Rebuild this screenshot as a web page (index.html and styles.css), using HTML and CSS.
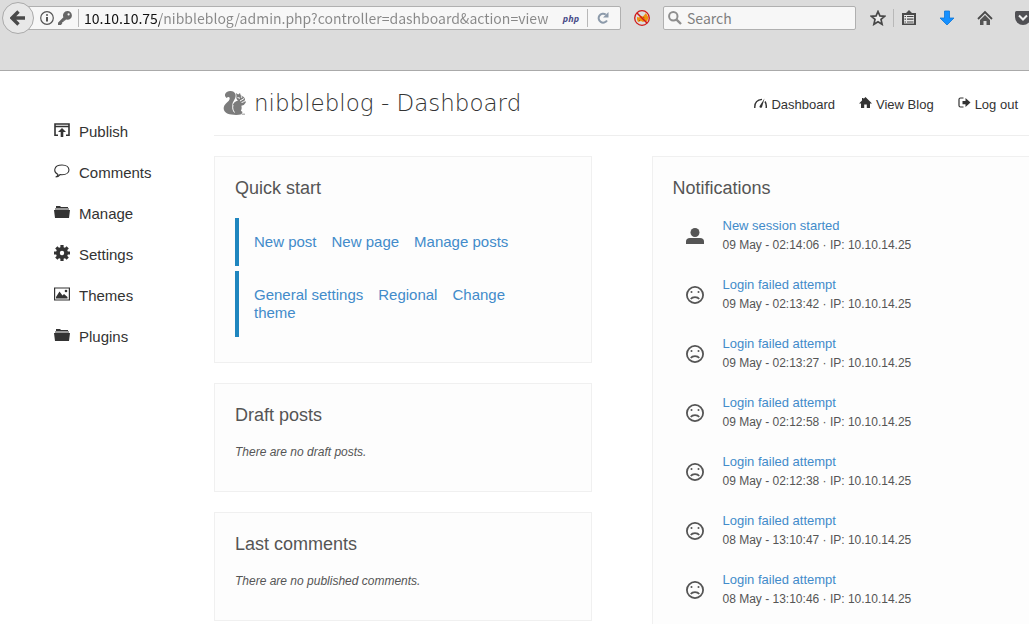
FILE: index.html
```html
<!DOCTYPE html>
<html lang="en">
<head>
  <meta charset="UTF-8">
  <title>nibbleblog - Dashboard</title>
  <link rel="stylesheet" href="styles.css">
</head>
<body>
  <svg class="sprite" aria-hidden="true">
    <symbol id="folder" viewBox="0 0 16 14">
      <path d="M2 3V1h4l1 1h7v1z" fill="#333"/>
      <path d="M1 3h14v2H1z" fill="#999"/>
      <path d="M0 5h16l-1 8H1z" fill="#333"/>
    </symbol>
    <symbol id="sad" viewBox="0 0 18 18">
      <circle cx="9" cy="9" r="8.1" fill="none" stroke="#555" stroke-width="1.8"/>
      <circle cx="5.500" cy="6" r="1" fill="#555"/>
      <circle cx="12.500" cy="6" r="1" fill="#555"/>
      <path d="M4.8 13c1.6-2.6 6.800-2.6 8.400 0" fill="none" stroke="#555" stroke-width="1.700"/>
    </symbol>
  </svg>

  <!-- Browser toolbar -->
  <div class="toolbar">
    <button class="back-button" aria-label="Back">
      <svg width="16" height="16" viewBox="0 0 16 16"><path d="M8.500 1.500L2 8l6.500 6.500M3 8h12" fill="none" stroke="#4a4a4a" stroke-width="3.400"/></svg>
    </button>
    <div class="url-bar">
      <svg width="14" height="14" viewBox="0 0 14 14"><circle cx="7" cy="7" r="6.300" fill="none" stroke="#555" stroke-width="1.200"/><path d="M6 6h2v4.500H6zM6 3.200h2v1.600H6z" fill="#555"/></svg>
      <svg class="key-icon" width="14" height="14" viewBox="0 0 14 14"><path d="M9.500 0a4.400 4.400 0 0 1 0 8.800L8 8.600 6.800 9.800H5.600v1.200H4.300v1.300L3 14H0v-2.200l5.400-5.600A4.400 4.400 0 0 1 9.500 0z" fill="#666"/><circle cx="10.600" cy="3.400" r="1.100" fill="#f7f7f7"/></svg>
      <span class="divider"></span>
      <input class="url-input" type="text" aria-label="Address" value="10.10.10.75/nibbleblog/admin.php?controller=dashboard&amp;action=view">
      <span class="php-badge">php</span>
      <span class="divider"></span>
      <button class="icon-button reload" aria-label="Reload">
        <svg width="12" height="12" viewBox="0 0 12 12"><path d="M8.800 2.500A4.500 4.500 0 1 0 10 8.500" fill="none" stroke="#8c9aaa" stroke-width="2"/><path d="M11.500 0v5.500H6z" fill="#8c9aaa"/></svg>
      </button>
    </div>
    <button class="icon-button bug" aria-label="Firebug">
      <svg width="16" height="16" viewBox="0 0 16 16"><path d="M3 7l2 .5L7 6l2 .5L12 3l1 2 1.500 2.500-1.500 4-2-.5-2 1-2-1-3 1-1-2.500z" fill="#f09010"/><path d="M9 7l1.500 1M5 10l1 1" stroke="#a85a00"/><circle cx="8" cy="8" r="7.300" fill="none" stroke="#d01818" stroke-width="1.300"/><path d="M3 3l10 10" stroke="#d01818" stroke-width="1.500"/></svg>
    </button>
    <div class="search-bar">
      <svg width="14" height="14" viewBox="0 0 14 14"><circle cx="5.300" cy="5.300" r="4.200" fill="none" stroke="#8e8e8e" stroke-width="2"/><path d="M8.300 8.300l4.700 4.700" stroke="#8e8e8e" stroke-width="2.400"/></svg>
      <input class="search-input" type="text" aria-label="Search" placeholder="Search">
    </div>
    <div class="tools">
      <button class="icon-button" aria-label="Bookmark">
        <svg width="16" height="16" viewBox="0 0 16 16"><path d="M8 1.500l1.900 4.400 4.700.4-3.600 3.100 1.100 4.900L8 11.700l-4.100 2.600L5 9.400 1.400 6.300l4.700-.4z" fill="#ededed" stroke="#484848" stroke-width="1.700"/></svg>
      </button>
      <span class="divider"></span>
      <button class="icon-button" aria-label="Bookmarks list">
        <svg width="16" height="16" viewBox="0 0 16 16"><path d="M1 3h4l3-3 3 3h4v12H1z" fill="#4a4a4a"/><path d="M3 5h10v8.500H3z" fill="#e6e6e6"/><path d="M3.500 6.500h1.500M3.500 9.200h1.500M3.500 12h1.500M6 6.500h6.500M6 9.200h6.500M6 12h6.500" stroke="#4a4a4a" stroke-width="1.200"/></svg>
      </button>
      <button class="icon-button download" aria-label="Downloads">
        <svg width="16" height="16" viewBox="0 0 16 16"><path d="M5.500 1h5v7H15l-7 7-7-7h4.500z" fill="#1590ff" stroke="#0f76d6" stroke-width=".8"/></svg>
      </button>
      <button class="icon-button" aria-label="Home">
        <svg width="16" height="16" viewBox="0 0 16 16"><path d="M1 9l7-7 7 7" fill="none" stroke="#4a4a4a" stroke-width="1.800"/><path d="M3 10l5-5 5 5v5H9.500v-4h-3v4H3z" fill="#555"/></svg>
      </button>
      <button class="icon-button" aria-label="Pocket">
        <svg width="16" height="16" viewBox="0 0 16 16"><path d="M0 2.500Q0 1 1.500 1h13Q16 1 16 2.500V7A8 8 0 0 1 0 7z" fill="#505054"/><path d="M4 5.500l4 4 4-4" fill="none" stroke="#eee" stroke-width="2"/></svg>
      </button>
    </div>
  </div>

  <div class="page">
    <nav class="sidebar">
      <a href="#">
        <svg width="16" height="14" viewBox="0 0 16 14"><path d="M4 12.200H1V1h14v11.200h-3M1 3.500h14" fill="none" stroke="#333" stroke-width="1.600"/><path d="M8 5l4 4H9.300v5H6.700V9H4z" fill="#333"/></svg>
        Publish
      </a>
      <a href="#">
        <svg width="16" height="14" viewBox="0 0 16 14"><path d="M4 10.500C-1 8-.5 1 8 1c9 0 9.500 9.500 0 9.800-1 0-1.500 0-2-.2-1 1.400-2.500 2.300-4.300 2.300C3 12.400 3.800 11.600 4 10.500z" fill="none" stroke="#333" stroke-width="1.100"/></svg>
        Comments
      </a>
      <a href="#">
        <svg width="16" height="14"><use href="#folder"/></svg>
        Manage
      </a>
      <a href="#">
        <svg width="16" height="16" viewBox="0 0 16 16"><path d="M8 0v16M0 8h16M2.300 2.300l11.400 11.400M13.700 2.300L2.300 13.700" stroke="#333" stroke-width="3.200"/><circle cx="8" cy="8" r="6" fill="#333"/><circle cx="8" cy="8" r="2.200" fill="#fff"/></svg>
        Settings
      </a>
      <a href="#">
        <svg width="16" height="14" viewBox="0 0 16 14"><path d="M.6 1h14.800v12H.6z" fill="none" stroke="#333" stroke-width="1.200"/><path d="M2 11.500V10l3.500-5.500 3 4 1.500-1.500 3.500 3v1.500z" fill="#333"/><circle cx="12" cy="4" r="1.300" fill="#333"/></svg>
        Themes
      </a>
      <a href="#">
        <svg width="16" height="14"><use href="#folder"/></svg>
        Plugins
      </a>
    </nav>

    <div class="content">
      <header class="header">
        <svg width="24" height="26" viewBox="0 0 24 26">
          <path d="M3.500 8C0 5 3 .8 7.500 1c5 .2 6.500 4.500 4 8.500-1.400 2.300-2.500 4-2 6.500.5-3 3-5 5.500-5.500-1.500-.8-2-2.500-1.500-4.500L13 3l2.200 1.600L17 3l.8 2.500c2 .3 3.500 1.600 4.200 3.500.3 1.500-1 2.600-3 2.700l-.8 1.300 2-.5 2.300-1.500.3 1.500-2 2.500-2.500.7c.6 1.800.5 3.500-.4 5l1.600 1.300-1 2.300c-3 .9-7 .8-10 .3C3 24 0 21 .8 17c.5-2.500 3-4 5-6.300C8 8 6 5.500 3.500 8z" fill="#7c7c7c"/>
          <path d="M10 15c-.8 3 0 5.500 1.500 7.500M14.500 7.500l2.500.8M17 11l4-2.500" fill="none" stroke="#fff" stroke-width="1"/>
          <circle cx="18.600" cy="7" r=".8" fill="#fff"/>
          <path d="M19 24.200h3" stroke="#aaa" stroke-width="1.200"/>
        </svg>
        <h1>nibbleblog - Dashboard</h1>
        <div class="header-links">
          <a href="#">
            <svg width="13" height="12" viewBox="0 0 13 12"><path d="M.8 11C.5 6 3 2.800 8 2.400M11 4.500c1.200 1.800 1.500 4 1.200 6.500" fill="none" stroke="#333" stroke-width="1.400"/><path d="M10.500 1.500L8 10c-.6 1.500-2.800.8-2.500-.8z" fill="#333"/></svg>
            Dashboard
          </a>
          <a href="#">
            <svg width="13" height="12" viewBox="0 0 13 12"><path d="M6.500 0L13 6.500h-2V11H7.800V7.500H5.200V11H2V6.500H0L3 3.500V1h1.500v1z" fill="#333"/></svg>
            View Blog
          </a>
          <a href="#">
            <svg width="13" height="12" viewBox="0 0 13 12"><path d="M5.500 1H2.500Q1 1 1 2.500v6Q1 10 2.500 10h3" fill="none" stroke="#333" stroke-width="1.200"/><path d="M4.500 4H7.500V1l5 4.500-5 4.500V7.200h-3z" fill="#333"/></svg>
            Log out
          </a>
        </div>
      </header>

      <main class="columns">
        <div class="column">
          <section class="card">
            <h2>Quick start</h2>
            <div class="quick-links"><a href="#">New post</a><a href="#">New page</a><a href="#">Manage posts</a></div>
            <div class="quick-links"><a href="#">General settings</a><a href="#">Regional</a><a href="#">Change theme</a></div>
          </section>
          <section class="card">
            <h2>Draft posts</h2>
            <p class="empty">There are no draft posts.</p>
          </section>
          <section class="card">
            <h2>Last comments</h2>
            <p class="empty">There are no published comments.</p>
          </section>
        </div>

        <section class="card notifications">
          <h2>Notifications</h2>
          <ul>
            <li>
              <svg width="18" height="18" viewBox="0 0 18 18"><circle cx="9" cy="5.500" r="4.500" fill="#555"/><path d="M0 17v-2.500Q0 11 4 11h10q4 0 4 3.500V17z" fill="#555"/></svg>
              <div><a href="#">New session started</a><p>09 May - 02:14:06 · IP: 10.10.14.25</p></div>
            </li>
            <li>
              <svg width="18" height="18"><use href="#sad"/></svg>
              <div><a href="#">Login failed attempt</a><p>09 May - 02:13:42 · IP: 10.10.14.25</p></div>
            </li>
            <li>
              <svg width="18" height="18"><use href="#sad"/></svg>
              <div><a href="#">Login failed attempt</a><p>09 May - 02:13:27 · IP: 10.10.14.25</p></div>
            </li>
            <li>
              <svg width="18" height="18"><use href="#sad"/></svg>
              <div><a href="#">Login failed attempt</a><p>09 May - 02:12:58 · IP: 10.10.14.25</p></div>
            </li>
            <li>
              <svg width="18" height="18"><use href="#sad"/></svg>
              <div><a href="#">Login failed attempt</a><p>09 May - 02:12:38 · IP: 10.10.14.25</p></div>
            </li>
            <li>
              <svg width="18" height="18"><use href="#sad"/></svg>
              <div><a href="#">Login failed attempt</a><p>08 May - 13:10:47 · IP: 10.10.14.25</p></div>
            </li>
            <li>
              <svg width="18" height="18"><use href="#sad"/></svg>
              <div><a href="#">Login failed attempt</a><p>08 May - 13:10:46 · IP: 10.10.14.25</p></div>
            </li>
          </ul>
        </section>
      </main>
    </div>
  </div>
</body>
</html>
```
FILE: styles.css
```css
* {
  box-sizing: border-box;
}

body {
  margin: 0;
  font-family: "Liberation Sans", Arial, sans-serif;
  font-size: 15px;
  color: #555;
  background-color: #fff;
  overflow-x: hidden;
}

h1, h2, p, ul {
  margin: 0;
  padding: 0;
}

a {
  color: #428bca;
  text-decoration: none;
}

svg {
  flex: none;
}

.sprite {
  display: none;
}

/* Browser toolbar */
.toolbar {
  display: flex;
  align-items: flex-start;
  height: 71px;
  padding: 2px 0 0 2px;
  background-color: #dcdcdc;
  border-bottom: 1px solid #aaa;
  overflow: hidden;
}

.back-button {
  display: flex;
  flex: none;
  align-items: center;
  justify-content: center;
  width: 32px;
  height: 32px;
  padding: 0;
  border: 1px solid #aaa;
  border-radius: 50%;
  background-color: #e8e8e8;
  z-index: 1;
}

.url-bar,
.search-bar {
  display: flex;
  align-items: center;
  height: 24px;
  margin-top: 4px;
  border: 1px solid #b0b0b0;
  border-radius: 2px;
  background-color: #f7f7f7;
}

.url-bar {
  flex: 1;
  margin-left: -8px;
  padding-left: 13px;
}

.url-bar .divider {
  margin: 0 5px 0 6px;
}

.key-icon {
  margin-left: 4px;
}

.url-input,
.search-input {
  flex: 1;
  min-width: 0;
  height: 22px;
  padding: 0;
  border: none;
  outline: none;
  background-color: transparent;
  font-family: "Noto Sans CJK SC", "Noto Sans", sans-serif;
  font-size: 14px;
  color: #888;
}

/* Host part of the address is darker than the path */
.url-input {
  background-image: linear-gradient(to right, #111 76px, #888 76px);
  background-clip: text;
  -webkit-background-clip: text;
  color: transparent;
}

.search-input::placeholder {
  color: #808080;
}

.php-badge {
  margin-left: 8px;
  font-family: "Noto Sans", sans-serif;
  font-size: 9px;
  font-style: italic;
  font-weight: bold;
  color: #484c89;
}

.divider {
  flex: none;
  width: 1px;
  height: 18px;
  background-color: #b8b8b8;
}

.icon-button {
  display: flex;
  flex: none;
  padding: 0;
  border: none;
  background: none;
}

.url-bar .php-badge + .divider {
  margin-left: 8px;
}

.reload {
  margin: 0 11px 0 4px;
}

.bug {
  margin: 8px 13px 0;
}

.search-bar {
  flex: none;
  width: 193px;
  padding-left: 4px;
  gap: 5px;
}

.tools {
  display: flex;
  flex: none;
  align-items: center;
  gap: 22px;
  width: 173px;
  margin-top: 7px;
  padding-left: 14px;
}

.tools .divider {
  margin: 0 -15px;
}

/* Page */
.page {
  display: flex;
}

.sidebar {
  flex: none;
  width: 214px;
  padding: 40px 0 0 54px;
}

.sidebar a {
  display: flex;
  align-items: center;
  gap: 9px;
  height: 41px;
  color: #333;
}

.sidebar svg {
  margin-bottom: 3px;
}

.content {
  flex: 1;
  min-width: 0;
}

.header {
  display: flex;
  align-items: center;
  height: 65px;
  padding: 0 11px 0 9px;
  border-bottom: 1px solid #eee;
}

.header h1 {
  margin-left: 7px;
  font-family: "DejaVu Sans", sans-serif;
  font-size: 23px;
  font-weight: 200;
  color: #333;
}

.header-links {
  display: flex;
  gap: 24px;
  margin-left: auto;
  padding-top: 2px;
  font-size: 13px;
}

.header-links a {
  display: flex;
  align-items: center;
  gap: 4px;
  color: #333;
}

.header-links svg {
  margin-bottom: 2px;
}

.columns {
  display: grid;
  grid-template-columns: 1fr 1fr;
  gap: 60px;
  padding-top: 20px;
}

.column {
  display: flex;
  flex-direction: column;
  gap: 20px;
}

.card {
  padding: 20px;
  border: 1px solid #f0f0f0;
  background-color: #fdfdfd;
}

.card h2 {
  margin-bottom: 19px;
  font-size: 18px;
  font-weight: normal;
  line-height: 22px;
}

.quick-links {
  margin-bottom: 5px;
  padding: 15px;
  border-left: 4px solid #1f86bf;
  line-height: 18px;
}

.quick-links a {
  margin-right: 15px;
}

.empty {
  margin-bottom: 11px;
  font-size: 12px;
  font-style: italic;
  line-height: 15px;
}

.notifications {
  border-right: none;
}

.notifications h2 {
  margin-bottom: 18px;
}

.notifications ul {
  list-style: none;
}

.notifications li {
  display: flex;
  align-items: center;
  gap: 19px;
  margin-bottom: 21px;
  padding-left: 13px;
  font-size: 13px;
  line-height: 18px;
}

.notifications p {
  font-size: 12px;
  line-height: 20px;
}
```
